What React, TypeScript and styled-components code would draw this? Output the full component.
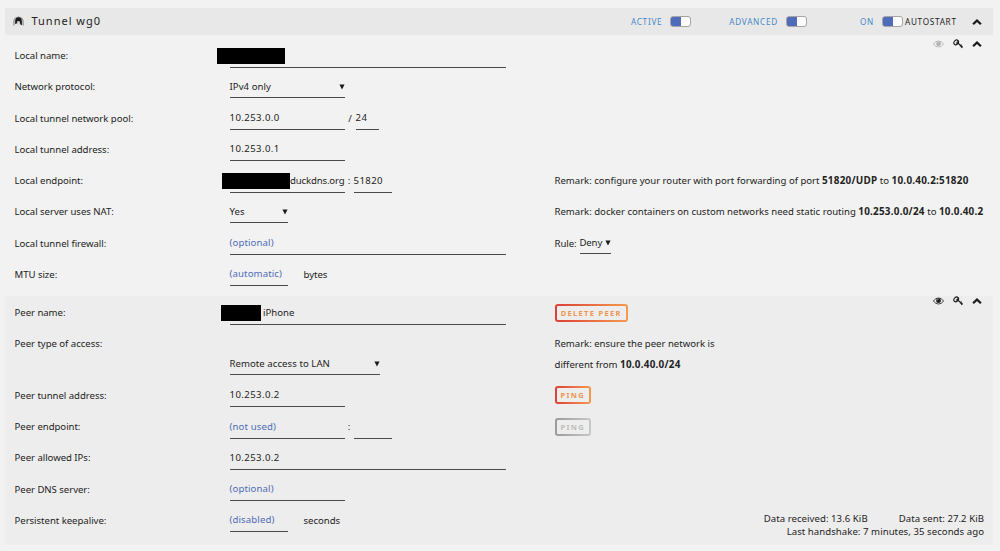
import React from "react";
import styled, { createGlobalStyle } from "styled-components";

const GlobalStyle = createGlobalStyle`
  * {
    box-sizing: border-box;
  }

  body {
    margin: 0;
    background: #f2f2f2;
    color: #242323;
    font-family: "Noto Sans", sans-serif;
    font-size: 9.6px;
    letter-spacing: -0.04px;
  }
`;

const ChevronUp = () => (
  <svg width="10" height="10" viewBox="0 0 10 10" fill="none">
    <path d="M1.1 7.3 5 3.5 8.9 7.3" stroke="#1c1b1b" strokeWidth="2.3" />
  </svg>
);

const Eye = ({ color = "#1c1b1b" }: { color?: string }) => (
  <svg width="11" height="8" viewBox="0 0 11 8">
    <path
      d="M.5 4C2.9.1 8.1.1 10.5 4 8.1 7.9 2.9 7.9.5 4z"
      fill="none"
      stroke={color}
      strokeWidth=".8"
    />
    <circle cx="5.5" cy="3.7" r="2.4" fill={color} />
    <path d="M4.2 3.5A1.3 1.3 0 0 1 5.5 2.3" fill="none" stroke="#f2f2f2" strokeWidth=".5" />
  </svg>
);

const Key = () => (
  <svg width="10" height="10" viewBox="0 0 10 10" fill="none" stroke="#1c1b1b">
    <ellipse
      cx="3.2"
      cy="3.4"
      rx="2.6"
      ry="2"
      transform="rotate(-45 3.2 3.4)"
      strokeWidth="1.1"
    />
    <path d="M3 3.8 4.900 4.100 8.900 7.700M4.900 1.600 5 4.100" strokeWidth="1.2" />
    <path d="M8.600 5.700 7 7.400M9.700 7.400 8.300 9" strokeWidth="1.100" />
  </svg>
);

const TunnelLogo = () => (
  <svg width="11" height="11" viewBox="0 0 11 11" fill="none">
    <path d="M.9 9.5V5.6a4.6 4.6 0 0 1 9.2 0v3.9" stroke="#858585" strokeWidth="1.1" />
    <path
      d="M2.1 7.8V5.2c0-2.300 1.400-3.900 3.400-3.900s3.400 1.600 3.400 3.900v4L7.400 8.500 6.600 5.200H4.400L3.400 8z"
      fill="#1c1b1b"
    />
    <path d="M4.6 5.8v2.5M6.3 5.8v2.5" stroke="#b4b4b4" strokeWidth=".7" />
  </svg>
);

const Arrow = () => (
  <svg width="6" height="6" viewBox="0 0 6 6">
    <path d="M.4.4h5.2L3 5.6z" fill="#1c1b1b" />
  </svg>
);

const App = () => {
  return (
    <Page>
      <GlobalStyle />
      <Header>
        <TunnelLogo />
        <Title>Tunnel wg0</Title>
        <Control>
          <Blue>ACTIVE</Blue>
          <Switch />
        </Control>
        <Control $left={38}>
          <Blue>ADVANCED</Blue>
          <Switch />
        </Control>
        <Control $left={53}>
          <Blue>ON</Blue>
          <Switch />
        </Control>
        <Autostart>AUTOSTART</Autostart>
        <ChevronUp />
      </Header>

      <Section $height={257}>
        <Icons>
          <Eye color="#b0b0b0" />
          <Key />
          <ChevronUp />
        </Icons>
        <Row>
          <Label>Local name:</Label>
          <Cell>
            <Field $width={276}>
              <Redacted $left={-12.5} $width={68} />
            </Field>
          </Cell>
        </Row>
        <Row>
          <Label>Network protocol:</Label>
          <Cell>
            <Select $width={115}>
              IPv4 only
              <Arrow />
            </Select>
          </Cell>
        </Row>
        <Row>
          <Label>Local tunnel network pool:</Label>
          <Cell>
            <Field $width={115} $digits>
              10.253.0.0
            </Field>
            <Divider $width={11}>/</Divider>
            <Field $width={23} $digits>
              24
            </Field>
          </Cell>
        </Row>
        <Row>
          <Label>Local tunnel address:</Label>
          <Cell>
            <Field $width={115} $digits>
              10.253.0.1
            </Field>
          </Cell>
        </Row>
        <Row>
          <Label>Local endpoint:</Label>
          <Cell>
            <Field $width={115} $indent={60.5} $tight>
              <Redacted $left={-8} $width={68} />
              duckdns.org
            </Field>
            <Divider $width={9}>:</Divider>
            <Field $width={38} $digits>
              51820
            </Field>
          </Cell>
          <Remark>
            Remark: configure your router with port forwarding of port <b>51820/UDP</b> to{" "}
            <b>10.0.40.2:51820</b>
          </Remark>
        </Row>
        <Row>
          <Label>Local server uses NAT:</Label>
          <Cell>
            <Select $width={58}>
              Yes
              <Arrow />
            </Select>
          </Cell>
          <Remark>
            Remark: docker containers on custom networks need static routing <b>10.253.0.0/24</b> to{" "}
            <b>10.0.40.2</b>
          </Remark>
        </Row>
        <Row>
          <Label>Local tunnel firewall:</Label>
          <Cell>
            <Field $width={276} $hint>
              (optional)
            </Field>
          </Cell>
          <Cell>
            <RuleLabel>Rule:</RuleLabel>
            <Select $width={31} $tight>
              Deny
              <Arrow />
            </Select>
          </Cell>
        </Row>
        <Row>
          <Label>MTU size:</Label>
          <Cell>
            <Field $width={58} $hint>
              (automatic)
            </Field>
            <Unit>bytes</Unit>
          </Cell>
        </Row>
      </Section>

      <Section $height={249} $shaded>
        <Icons>
          <Eye />
          <Key />
          <ChevronUp />
        </Icons>
        <Row>
          <Label>Peer name:</Label>
          <Cell>
            <Field $width={276} $indent={33.5}>
              <Redacted $left={-9} $width={40.5} />
              iPhone
            </Field>
          </Cell>
          <Cell>
            <Button $width={73.5}>DELETE PEER</Button>
          </Cell>
        </Row>
        <Row $tall>
          <Label>Peer type of access:</Label>
          <Cell>
            <Select $width={150}>
              Remote access to LAN
              <Arrow />
            </Select>
          </Cell>
          <Remark>
            Remark: ensure the peer network is
            <br />
            different from <b>10.0.40.0/24</b>
          </Remark>
        </Row>
        <Row>
          <Label>Peer tunnel address:</Label>
          <Cell>
            <Field $width={115} $digits>
              10.253.0.2
            </Field>
          </Cell>
          <Cell>
            <Button $width={36.5}>PING</Button>
          </Cell>
        </Row>
        <Row>
          <Label>Peer endpoint:</Label>
          <Cell>
            <Field $width={115} $hint>
              (not used)
            </Field>
            <Divider $width={9}>:</Divider>
            <Field $width={38} />
          </Cell>
          <Cell>
            <Button $width={36.5} $off>
              PING
            </Button>
          </Cell>
        </Row>
        <Row>
          <Label>Peer allowed IPs:</Label>
          <Cell>
            <Field $width={276} $digits>
              10.253.0.2
            </Field>
          </Cell>
        </Row>
        <Row>
          <Label>Peer DNS server:</Label>
          <Cell>
            <Field $width={115} $hint>
              (optional)
            </Field>
          </Cell>
        </Row>
        <Row>
          <Label>Persistent keepalive:</Label>
          <Cell>
            <Field $width={58} $hint>
              (disabled)
            </Field>
            <Unit>seconds</Unit>
          </Cell>
          <Stats>
            <div>
              <span>Data received: 13.6 KiB</span>
              <span>Data sent: 27.2 KiB</span>
            </div>
            <div>Last handshake: 7 minutes, 35 seconds ago</div>
          </Stats>
        </Row>
      </Section>
    </Page>
  );
};

export default App;

const Page = styled.div`
  width: 1000px;
  height: 551px;
  padding: 8px 7px 0 5px;
  overflow: hidden;
`;

const Header = styled.div`
  display: flex;
  align-items: center;
  height: 27px;
  padding: 0 11px 0 8px;
  background: #e8e8e8;
`;

const Title = styled.div`
  flex: 1;
  margin-left: 7.5px;
  padding-bottom: 2px;
  font-size: 11px;
  letter-spacing: 1px;
`;

const Control = styled.div<{ $left?: number }>`
  display: flex;
  align-items: center;
  gap: 8px;
  margin-left: ${({ $left }) => $left || 0}px;
`;

const Blue = styled.span`
  color: #4689c8;
  font-size: 8.2px;
  letter-spacing: 0.72px;
`;

const Switch = styled.div`
  width: 21px;
  height: 11px;
  border: 1px solid #a5a5a5;
  border-radius: 3px;
  background: linear-gradient(90deg, #4f6cb8 0 10px, #fbfbfb 10px);
`;

const Autostart = styled.span`
  width: 67px;
  margin-left: 2px;
  font-size: 8.2px;
  letter-spacing: 0.7px;
`;

const Section = styled.div<{ $height: number; $shaded?: boolean }>`
  position: relative;
  height: ${({ $height }) => $height}px;
  margin-top: ${({ $shaded }) => ($shaded ? 0 : 4)}px;
  padding-top: 1px;
  background: ${({ $shaded }) => ($shaded ? "#ededed" : "transparent")};
`;

const Icons = styled.div`
  position: absolute;
  top: 0;
  right: 11px;
  display: flex;
  align-items: center;
  gap: 9px;
  height: 10px;
`;

const Row = styled.div<{ $tall?: boolean }>`
  display: grid;
  grid-template-columns: 215px 325px 1fr;
  align-items: ${({ $tall }) => ($tall ? "end" : "start")};
  height: ${({ $tall }) => ($tall ? 51.5 : 31.28)}px;
  padding-left: 9.5px;
  line-height: 31px;
`;

const Label = styled.div`
  align-self: start;
`;

const Cell = styled.div`
  display: flex;
  align-items: center;
  height: 31px;
`;

const Remark = styled.div`
  align-self: start;
  line-height: 21px;
  padding-top: 5px;
  letter-spacing: -0.02px;
  white-space: nowrap;

  b {
    font-size: 9.9px;
    letter-spacing: 0.25px;
  }
`;

const Field = styled.div<{
  $width: number;
  $indent?: number;
  $hint?: boolean;
  $digits?: boolean;
  $tight?: boolean;
}>`
  position: relative;
  width: ${({ $width }) => $width}px;
  height: 24px;
  padding-left: ${({ $indent }) => $indent || 0}px;
  border-bottom: 1px solid #4a4a4a;
  color: ${({ $hint }) => ($hint ? "#4f6cb8" : "inherit")};
  letter-spacing: ${({ $hint, $digits, $tight }) => ($digits ? 0.4 : $hint ? 0.12 : $tight ? -0.15 : 0)}px;
  line-height: 24px;
  white-space: nowrap;
`;

const Select = styled(Field)`
  display: flex;
  align-items: center;
  justify-content: space-between;
  height: 22px;
  padding-top: 1px;
  letter-spacing: ${({ $tight }) => ($tight ? -0.15 : 0.05)}px;
`;

const Redacted = styled.span<{ $left: number; $width: number }>`
  position: absolute;
  top: 4px;
  left: ${({ $left }) => $left}px;
  width: ${({ $width }) => $width}px;
  height: 16px;
  background: #000;
`;

const Divider = styled.span<{ $width: number }>`
  width: ${({ $width }) => $width}px;
  text-align: center;
`;

const RuleLabel = styled.span`
  width: 25px;
`;

const Unit = styled.span`
  margin-left: 16px;
`;

const Button = styled.button<{ $width: number; $off?: boolean }>`
  width: ${({ $width }) => $width}px;
  height: 18px;
  padding: 0;
  border: 2px solid transparent;
  border-radius: 3px;
  background:
    linear-gradient(#ededed, #ededed) padding-box,
    ${({ $off }) => ($off ? "linear-gradient(90deg, #9b9b9b, #c8c8c8)" : "linear-gradient(90deg, #db4038, #f59a50)")}
      border-box;
  color: ${({ $off }) => ($off ? "#bdbdbd" : "#f0954f")};
  font: bold 7.5px "Noto Sans", sans-serif;
  letter-spacing: 1.3px;
`;

const Stats = styled.div`
  padding: 7px 9px 0 0;
  letter-spacing: 0.05px;
  line-height: 13px;
  text-align: right;

  span + span {
    margin-left: 31px;
  }
`;
